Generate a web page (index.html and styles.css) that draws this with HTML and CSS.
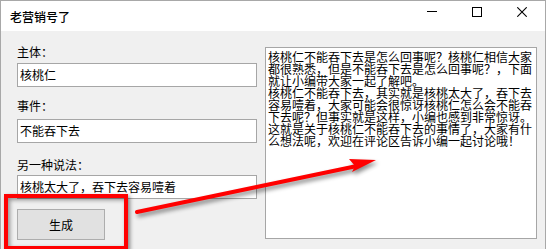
FILE: index.html
```html
<!DOCTYPE html>
<html lang="zh-CN">
<head>
<meta charset="utf-8">
<title>老营销号了</title>
<link rel="stylesheet" href="styles.css">
</head>
<body>
<div class="window">
  <div class="titlebar">
    <span class="title">老营销号了</span>
    <div class="controls">
      <svg class="ctl" width="10" height="10" viewBox="0 0 10 10"><line x1="0" y1="4.5" x2="10" y2="4.5" stroke="#000" stroke-width="1"/></svg>
      <svg class="ctl" width="10" height="10" viewBox="0 0 10 10"><rect x="0.5" y="0.5" width="9" height="9" fill="none" stroke="#000" stroke-width="1"/></svg>
      <svg class="ctl" width="10" height="10" viewBox="0 0 10 10"><path d="M0.3 0.3 L9.7 9.7 M9.7 0.3 L0.3 9.7" stroke="#000" stroke-width="1.1" fill="none"/></svg>
    </div>
  </div>
  <div class="client">
    <div class="form">
      <div class="label label-first">主体：</div>
      <div class="input">核桃仁</div>
      <div class="label label-second">事件：</div>
      <div class="input">不能吞下去</div>
      <div class="label label-third">另一种说法：</div>
      <div class="input">核桃太大了，吞下去容易噎着</div>
      <div class="button">生成</div>
    </div>
    <div class="output">核桃仁不能吞下去是怎么回事呢？核桃仁相信大家<br>都很熟悉，但是不能吞下去是怎么回事呢？，下面<br>就让小编带大家一起了解吧。<br>核桃仁不能吞下去，其实就是核桃太大了，吞下去<br>容易噎着，大家可能会很惊讶核桃仁怎么会不能吞<br>下去呢？但事实就是这样，小编也感到非常惊讶。<br>这就是关于核桃仁不能吞下去的事情了，大家有什<br>么想法呢，欢迎在评论区告诉小编一起讨论哦！</div>
  </div>
</div>
<div class="annot-box"></div>
<svg class="annot-arrow" width="546" height="249" viewBox="0 0 546 249">
  <g class="arrow-shape">
    <line x1="137" y1="212" x2="357" y2="166" stroke="#ff0000" stroke-width="4" stroke-linecap="round"/>
    <polygon points="376,160 349,159 355,166 352,172" fill="#ff0000"/>
  </g>
</svg>
</body>
</html>
```
FILE: styles.css
```css
html, body {
  margin: 0;
  padding: 0;
}
body {
  position: relative;
  width: 546px;
  height: 249px;
  overflow: hidden;
  background: #f0f0f0;
  font-family: "Noto Sans CJK SC", "Noto Sans", sans-serif;
  font-size: 12px;
  color: #000;
}
.window {
  box-sizing: border-box;
  width: 546px;
  height: 249px;
  border: 1px solid #a8a8a8;
  border-bottom: none;
  background: #f0f0f0;
}
.titlebar {
  height: 30px;
  background: #ffffff;
  display: flex;
  align-items: center;
  justify-content: space-between;
}
.title {
  padding-left: 9px;
  font-size: 12px;
  line-height: 16px;
  padding-top: 1px;
  font-weight: 500;
}
.controls {
  align-self: flex-start;
  display: flex;
  gap: 35px;
  padding-top: 6px;
  padding-right: 18px;
}
.ctl {
  display: block;
}
.client {
  display: flex;
  gap: 8px;
  padding-left: 16px;
}
.form {
  width: 240px;
  display: flex;
  flex-direction: column;
  align-items: flex-start;
}
.label {
  line-height: 16px;
  height: 16px;
  margin-bottom: 3px;
}
.label-first { margin-top: 13px; }
.label-second { margin-top: 11px; margin-bottom: 5px; }
.label-third { margin-top: 14px; margin-bottom: 2px; }
.input {
  box-sizing: border-box;
  width: 240px;
  height: 24px;
  border: 1px solid #a6a6a6;
  background: #ffffff;
  padding-left: 2px;
  line-height: 22px;
  white-space: nowrap;
}
.button {
  box-sizing: border-box;
  margin-top: 10px;
  width: 88px;
  height: 31px;
  border: 1px solid #adadad;
  background: #e1e1e1;
  display: flex;
  align-items: center;
  justify-content: center;
  line-height: 16px;
}
.output {
  box-sizing: border-box;
  margin-top: 16px;
  width: 272px;
  height: 192px;
  border: 1px solid #a6a6a6;
  background: #ffffff;
  padding: 3px 0 0 2px;
  line-height: 12px;
  white-space: nowrap;
  overflow: hidden;
}
.annot-box {
  position: absolute;
  left: 4px;
  top: 194px;
  width: 124px;
  height: 56px;
  box-sizing: border-box;
  border: 4px solid #ff0000;
  box-shadow: 2px 2px 4px rgba(0, 0, 0, 0.45), inset 2px 2px 4px rgba(0, 0, 0, 0.4);
}
.annot-arrow {
  position: absolute;
  left: 0;
  top: 0;
  pointer-events: none;
}
.arrow-shape {
  filter: drop-shadow(2px 3px 2px rgba(0, 0, 0, 0.45));
}
```
